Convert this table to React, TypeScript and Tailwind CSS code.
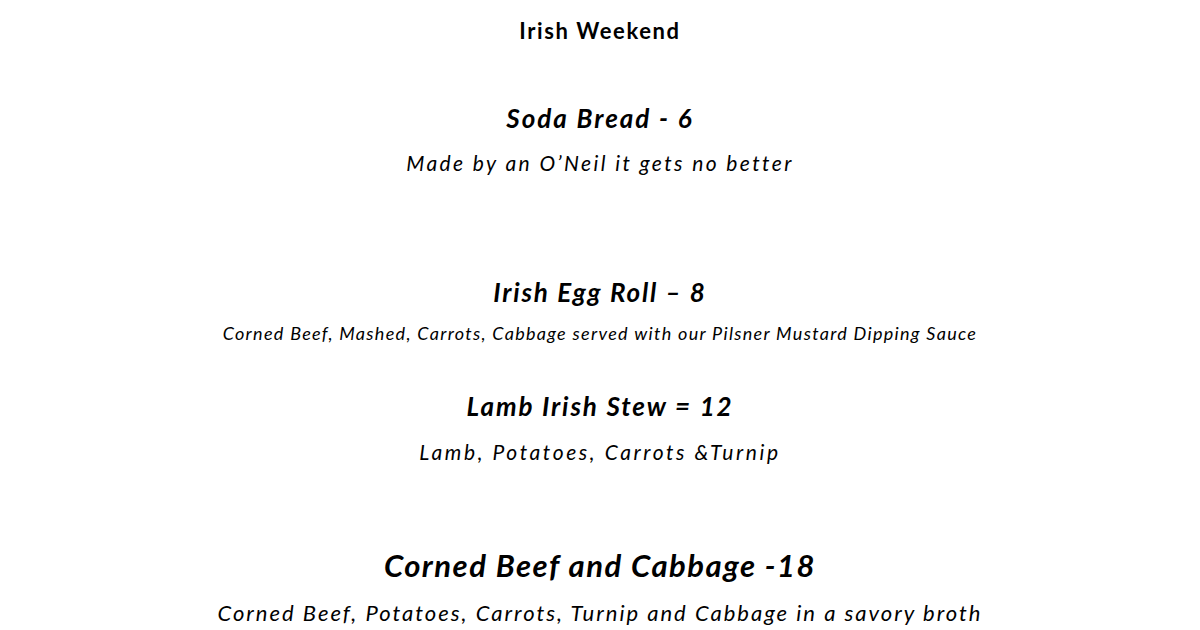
import React from "react";

const font = { fontFamily: "Lato, 'Open Sans', 'Liberation Sans', sans-serif" };

export default function App() {
  return (
    <div className="w-[1200px] h-[630px] bg-white overflow-hidden text-black" style={font}>
      <div className="flex flex-col items-center">
        <div className="h-[40px] mt-[11px] leading-[40px] text-[22px] font-bold whitespace-nowrap tracking-[1.6px]">Irish Weekend</div>
        <div className="h-[40px] mt-[47px] leading-[40px] text-[26px] font-bold italic whitespace-nowrap tracking-[2px]">Soda Bread - 6</div>
        <div className="h-[40px] mt-[5px] leading-[40px] text-[21px] italic whitespace-nowrap tracking-[2.4px]">Made by an O’Neil it gets no better</div>
        <div className="h-[40px] mt-[89px] leading-[40px] text-[26px] font-bold italic whitespace-nowrap tracking-[1.8px]">Irish Egg Roll – 8</div>
        <div className="h-[40px] mt-[1px] leading-[40px] text-[18px] italic whitespace-nowrap tracking-[1.3px]">Corned Beef, Mashed, Carrots, Cabbage served with our Pilsner Mustard Dipping Sauce</div>
        <div className="h-[40px] mt-[33px] leading-[40px] text-[26px] font-bold italic whitespace-nowrap tracking-[1.9px]">Lamb Irish Stew = 12</div>
        <div className="h-[40px] mt-[6px] leading-[40px] text-[21px] italic whitespace-nowrap tracking-[2.6px]">Lamb, Potatoes, Carrots &amp;Turnip</div>
        <div className="h-[40px] mt-[73px] leading-[40px] text-[31px] font-bold italic whitespace-nowrap tracking-[1.5px]">Corned Beef and Cabbage -18</div>
        <div className="h-[40px] mt-[8px] leading-[40px] text-[22px] italic whitespace-nowrap tracking-[2px]">Corned Beef, Potatoes, Carrots, Turnip and Cabbage in a savory broth</div>
      </div>
    </div>
  );
}
